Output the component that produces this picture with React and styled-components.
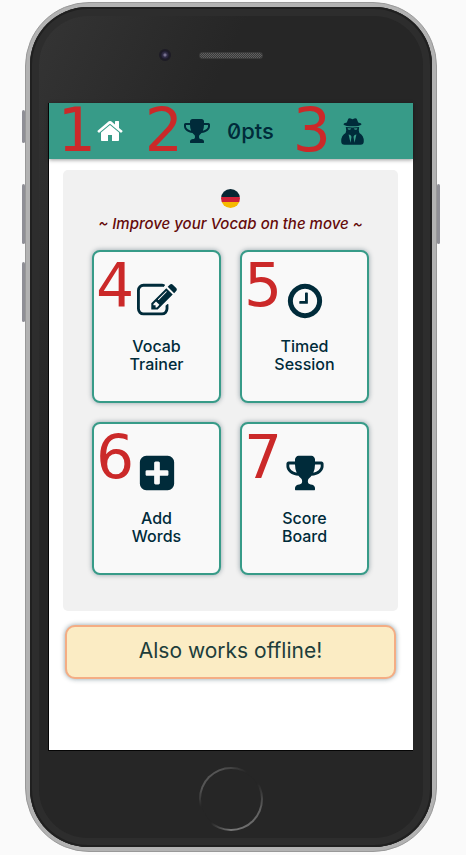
import React from "react";
import styled, { createGlobalStyle } from "styled-components";

const ink = "#002b3a";
const teal = "#379b88";

const GlobalStyle = createGlobalStyle`
  * { box-sizing: border-box; }
  body {
    margin: 0;
    background: #fafafa;
    color: ${ink};
    font-family: Inter, "DejaVu Sans", sans-serif;
  }
  button { font: inherit; color: inherit; cursor: pointer; }
`;

/* ---------- device ---------- */

const Stage = styled.div`
  padding: 2px 29px 3px 25px;
`;

const Device = styled.div`
  position: relative;
  padding: 4px;
  border: 1px solid #999;
  border-radius: 64px;
  background: #b2b2b2;
`;

const Bezel = styled.div`
  padding: 0 19px 0 18px;
  border-radius: 58px;
  background: linear-gradient(115deg, #353535 0, #262626 28%);
  box-shadow: inset 0 0 0 2px #202020, inset 0 0 0 9px #2d2d2d;
`;

const SideKey = styled.span`
  position: absolute;
  ${(p) => (p.$side === "right" ? "right: -4px;" : "left: -4px;")}
  top: ${(p) => p.$top}px;
  width: 3px;
  height: ${(p) => p.$length}px;
  border-radius: 2px;
  background: #8f8f96;
`;

const TopBezel = styled.div`
  height: 96px;
  display: grid;
  grid-template-columns: 1fr 64px 1fr;
  align-items: center;
`;

const Camera = styled.span`
  justify-self: end;
  width: 12px;
  height: 12px;
  margin-right: 28px;
  border: 2px solid #1d1b25;
  border-radius: 50%;
  background: radial-gradient(circle, #77718f 0 1px, #37324e 2px, #201d30 4px);
`;

const Speaker = styled.span`
  height: 7px;
  border: 1px solid #3a3a3a;
  border-radius: 3px;
  background: repeating-conic-gradient(#606060 0 25%, #393939 0 50%) 0 0 / 2px 2px;
`;

const BottomBezel = styled.div`
  height: 96px;
  display: flex;
  align-items: center;
  justify-content: center;
`;

const HomeKey = styled.button`
  width: 64px;
  height: 64px;
  padding: 0;
  border: 0;
  border-radius: 50%;
  background: conic-gradient(#444 0, #262626 30deg 60deg, #606060 110deg, #777 180deg, #262626 220deg 255deg, #555 290deg, #555 335deg, #444 360deg);
  &::before {
    content: "";
    display: block;
    width: 60px;
    height: 60px;
    margin: 2px;
    border-radius: 50%;
    background: #262626;
  }
`;

/* ---------- app ---------- */

const Screen = styled.div`
  padding-bottom: 71px;
  border: 1px solid #050505;
  border-width: 0 0 1px 1px;
  background: #fff;
`;

const NavBar = styled.nav`
  height: 56px;
  padding: 0 49px 0 47px;
  display: flex;
  align-items: center;
  justify-content: space-between;
  background: ${teal};
  box-shadow: 0 1px 4px rgba(0, 0, 0, 0.4);
`;

const NavButton = styled.button`
  position: relative;
  display: flex;
  align-items: center;
  gap: 16px;
  padding: 0;
  border: 0;
  background: none;
  color: ${(p) => (p.$active ? "#fff" : ink)};
`;

const Points = styled.span`
  padding-right: 8px;
  font-size: 22px;
  line-height: 28px;
  font-weight: 500;
  font-feature-settings: "zero";
`;

const Marker = styled.span`
  position: absolute;
  font-family: "DejaVu Sans", sans-serif;
  font-size: 60px;
  line-height: 60px;
  font-weight: 400;
  color: #cb2929;
  pointer-events: none;
`;

const NavMarker = styled(Marker)`
  right: 100%;
  top: 50%;
  margin-top: -31px;
  margin-right: ${(p) => p.$gap || 0}px;
`;

const TileMarker = styled(Marker)`
  left: 2px;
  top: 3px;
`;

const Panel = styled.main`
  margin: 11px 15px 0 14px;
  padding: 19px 29px 36px;
  border-radius: 5px;
  background: #f1f1f1;
`;

const Flag = styled.span`
  display: block;
  width: 19px;
  height: 19px;
  margin: 0 auto;
  border-radius: 50%;
  background: linear-gradient(#062733 0 42%, #cf2138 42% 66%, #f6b900 66%);
`;

const Tagline = styled.p`
  margin: 6px -20px 16px;
  text-align: center;
  white-space: nowrap;
  font-size: 15px;
  line-height: 20px;
  font-weight: 500;
  font-style: italic;
  color: #650b0b;
`;

const Tiles = styled.div`
  display: grid;
  grid-template-columns: 1fr 1fr;
  gap: 19px;
`;

const Tile = styled.button`
  position: relative;
  display: flex;
  flex-direction: column;
  align-items: center;
  gap: 16px;
  padding: 29px 20px 28px;
  border: 2px solid ${teal};
  border-radius: 8px;
  background: #f9f9f9;
  box-shadow: 0 0 5px rgba(0, 43, 58, 0.4);
`;

const TileLabel = styled.span`
  width: min-content;
  font-size: 16px;
  line-height: 18px;
  font-weight: 500;
  text-align: center;
`;

const Notice = styled.p`
  margin: 14px 17px 0 16px;
  padding: 12px 12px 14px;
  border: 2px solid #f4ad84;
  border-radius: 10px;
  background: #fbecc4;
  box-shadow: 0 0 5px rgba(0, 43, 58, 0.45);
  text-align: center;
  font-size: 21px;
  line-height: 24px;
  color: #203d3b;
`;

/* ---------- icons ---------- */

const icons = {
  home: "M1472 992v480q0 26-19 45t-45 19h-384v-384h-256v384h-384q-26 0-45-19t-19-45v-480q0-1 .5-3t.5-3l575-474 575 474q1 2 1 6zm223-69l-62 74q-8 9-21 11h-3q-13 0-21-7l-692-577-692 577q-12 8-24 7-13-2-21-11l-62-74q-8-10-7-23.5t11-21.5l719-599q32-26 76-26t76 26l244 204v-195q0-14 9-23t23-9h192q14 0 23 9t9 23v408l219 182q10 8 11 21.5t-7 23.5z",
  trophy: "M522 883q-74-162-74-371h-256v96q0 78 94.5 162t235.5 113zm1078-275v-96h-256q0 209-74 371 141-29 235.5-113t94.5-162zm128-128v128q0 71-41.5 143t-112 130-173 97.5-215.5 44.5q-42 54-95 95-38 34-52.5 72.5t-14.5 89.5q0 54 30.5 91t97.5 37q75 0 133.5 45.5t58.5 114.5v64q0 14-9 23t-23 9h-832q-14 0-23-9t-9-23v-64q0-69 58.5-114.5t133.5-45.5q67 0 97.5-37t30.5-91q0-51-14.5-89.5t-52.5-72.5q-53-41-95-95-113-5-215.5-44.5t-173-97.5-112-130-41.5-143v-128q0-40 28-68t68-28h288v-96q0-66 47-113t113-47h576q66 0 113 47t47 113v96h288q40 0 68 28t28 68z",
  edit: "M888 1184l116-116-152-152-116 116v56h96v96h56zm440-720q-16-16-33 1l-350 350q-17 17-1 33t33-1l350-350q17-17 1-33zm80 594v190q0 119-84.5 203.5t-203.5 84.5h-832q-119 0-203.5-84.5t-84.5-203.5v-832q0-119 84.5-203.5t203.5-84.5h832q63 0 117 25 15 7 18 23 3 17-9 29l-49 49q-14 14-32 8-23-6-45-6h-832q-66 0-113 47t-47 113v832q0 66 47 113t113 47h832q66 0 113-47t47-113v-126q0-13 9-22l64-64q15-15 35-7t20 29zm-96-738l288 288-672 672h-288v-288zm444 132l-92 92-288-288 92-92q28-28 68-28t68 28l152 152q28 28 28 68t-28 68z",
  clock: "M1024 544v448q0 14-9 23t-23 9h-320q-14 0-23-9t-9-23v-64q0-14 9-23t23-9h224v-352q0-14 9-23t23-9h64q14 0 23 9t9 23zm416 352q0-148-73-273t-198-198-273-73-273 73-198 198-73 273 73 273 198 198 273 73 273-73 198-198 73-273zm224 0q0 209-103 385.5t-279.5 279.5-385.5 103-385.5-103-279.5-279.5-103-385.5 103-385.5 279.5-279.5 385.5-103 385.5 103 279.5 279.5 103 385.5z",
  plus: "M1408 960v-128q0-26-19-45t-45-19h-320v-320q0-26-19-45t-45-19h-128q-26 0-45 19t-19 45v320h-320q-26 0-45 19t-19 45v128q0 26 19 45t45 19h320v320q0 26 19 45t45 19h128q26 0 45-19t19-45v-320h320q26 0 45-19t19-45zm256-544v960q0 119-84.5 203.5t-203.5 84.5h-960q-119 0-203.5-84.5t-84.5-203.5v-960q0-119 84.5-203.5t203.5-84.5h960q119 0 203.5 84.5t84.5 203.5z",
};

function Icon({ name, size }) {
  return (
    <svg width={size} height={size} viewBox="0 0 1792 1792" fill="currentColor" aria-hidden="true">
      <path d={icons[name]} />
    </svg>
  );
}

function SpyIcon() {
  return (
    <svg width="23" height="27" viewBox="0 0 23 27" fill="currentColor" aria-hidden="true">
      <path d="M5.8 4.6 7.3.8Q8.2-.1 9.7.6L11.5 1.2 13.3.6Q14.8-.1 15.7.8L17.2 4.6Q20.6 5.4 20.6 6.2 20 7.3 17.2 7.9 11.5 8.8 5.8 7.9 3 7.3 2.4 6.2 2.4 5.4 5.8 4.6Z" />
      <path
        fillRule="evenodd"
        d="M4.8 9.1Q11.5 10 18.2 9.1L17.8 12.6 18.4 15Q22.8 17.4 22.8 23.2 22.8 26.8 19.5 26.8H3.5Q.2 26.8.2 23.2.2 17.4 4.6 15L5.2 12.6ZM6.6 10.3 7.2 11.6Q9.4 12.1 10.3 10.5ZM16.4 10.3 15.8 11.6Q13.6 12.1 12.7 10.5ZM7.6 16.4 9.5 24.8 10.5 18.8 9.4 16.9ZM15.4 16.4 13.5 24.8 12.5 18.8 13.6 16.9Z"
      />
    </svg>
  );
}

const tiles = [
  { marker: 4, icon: "edit", label: "Vocab Trainer" },
  { marker: 5, icon: "clock", label: "Timed Session" },
  { marker: 6, icon: "plus", label: "Add Words" },
  { marker: 7, icon: "trophy", label: "Score Board" },
];

export default function App() {
  return (
    <Stage>
      <GlobalStyle />
      <Device>
        <SideKey $top={107} $length={33} />
        <SideKey $top={181} $length={60} />
        <SideKey $top={259} $length={60} />
        <SideKey $side="right" $top={181} $length={60} />
        <Bezel>
          <TopBezel>
            <Camera />
            <Speaker />
          </TopBezel>
          <Screen>
            <NavBar>
              <NavButton $active aria-label="Home">
                <NavMarker>1</NavMarker>
                <Icon name="home" size={28} />
              </NavButton>
              <NavButton>
                <NavMarker>2</NavMarker>
                <Icon name="trophy" size={28} />
                <Points>0pts</Points>
              </NavButton>
              <NavButton aria-label="Profile">
                <NavMarker $gap={10}>3</NavMarker>
                <SpyIcon />
              </NavButton>
            </NavBar>
            <Panel>
              <Flag role="img" aria-label="German" />
              <Tagline>~ Improve your Vocab on the move ~</Tagline>
              <Tiles>
                {tiles.map((t) => (
                  <Tile key={t.label}>
                    <TileMarker>{t.marker}</TileMarker>
                    <Icon name={t.icon} size={40} />
                    <TileLabel>{t.label}</TileLabel>
                  </Tile>
                ))}
              </Tiles>
            </Panel>
            <Notice>Also works offline!</Notice>
          </Screen>
          <BottomBezel>
            <HomeKey aria-label="Home key" />
          </BottomBezel>
        </Bezel>
      </Device>
    </Stage>
  );
}
